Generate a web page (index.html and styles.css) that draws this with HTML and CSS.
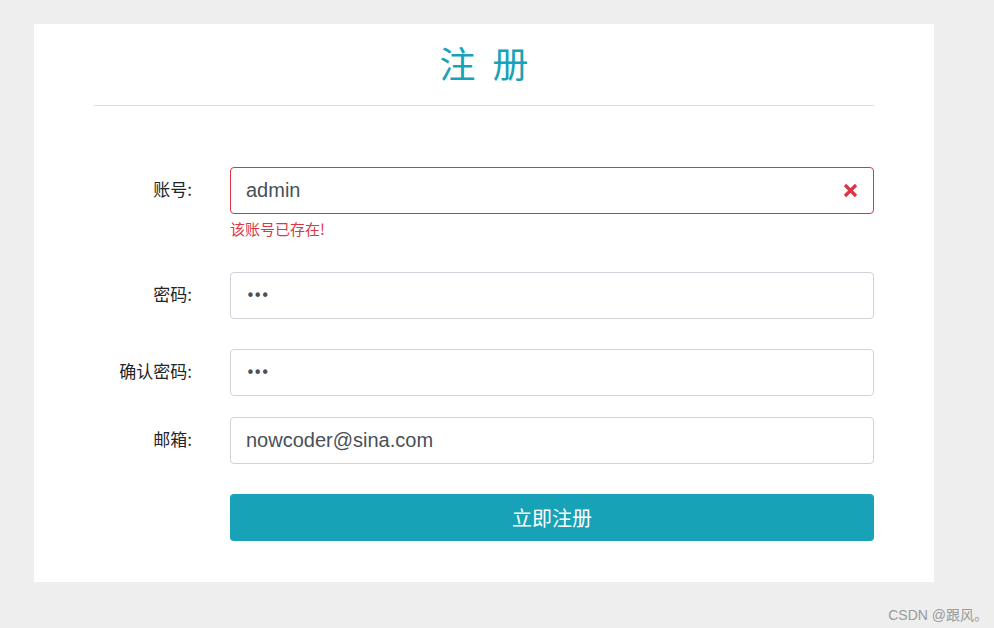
FILE: index.html
```html
<!DOCTYPE html>
<html lang="zh">
<head>
<meta charset="utf-8">
<title>注册</title>
<link rel="stylesheet" href="styles.css">
</head>
<body>
<div class="card">
  <h1 class="title">注 册</h1>
  <hr class="divider">
  <form class="form">
    <div class="row row-account">
      <label class="label">账号:</label>
      <div class="field">
        <div class="input invalid">
          <span class="value">admin</span>
          <svg class="x-icon" width="15" height="15" viewBox="0 0 15 15"><path d="M2 2 L13 13 M13 2 L2 13" stroke="#dc3545" stroke-width="3.2" stroke-linecap="butt"/></svg>
        </div>
        <div class="feedback">该账号已存在!</div>
      </div>
    </div>
    <div class="row row-pass">
      <label class="label">密码:</label>
      <div class="field"><div class="input"><span class="dots">•••</span></div></div>
    </div>
    <div class="row row-confirm">
      <label class="label">确认密码:</label>
      <div class="field"><div class="input"><span class="dots">•••</span></div></div>
    </div>
    <div class="row row-mail">
      <label class="label">邮箱:</label>
      <div class="field"><div class="input"><span class="value">nowcoder@sina.com</span></div></div>
    </div>
    <div class="row row-btn">
      <span class="label"></span>
      <div class="field"><button type="button" class="btn">立即注册</button></div>
    </div>
  </form>
</div>
<div class="watermark">CSDN @跟风。</div>
</body>
</html>
```
FILE: styles.css
```css
html, body {
  margin: 0;
  padding: 0;
}
body {
  background: #eeeeee;
  font-family: "Liberation Sans", "Noto Sans CJK SC", sans-serif;
  color: #212529;
  width: 994px;
  height: 628px;
  overflow: hidden;
  position: relative;
}
.card {
  background: #ffffff;
  width: 780px;
  margin: 24px 0 0 34px;
  padding: 12px 60px 41px;
}
.title {
  margin: 0;
  text-align: center;
  font-weight: 400;
  font-size: 36px;
  line-height: 52px;
  color: #17a2b8;
  font-family: "Noto Sans CJK SC", sans-serif;
  word-spacing: 9px;
}
.divider {
  margin: 17px 0 0;
  border: 0;
  border-top: 1px solid #dedede;
}
.form {
  padding-top: 61px;
}
.row {
  display: flex;
  align-items: flex-start;
}
.label {
  width: 98px;
  flex: none;
  text-align: right;
  font-size: 17px;
  line-height: 44px;
  margin-right: 38px;
  font-family: "Noto Sans CJK SC", sans-serif;
  color: #212529;
}
.field {
  flex: 1;
}
.input {
  height: 45px;
  border: 1px solid #ced4da;
  border-radius: 4px;
  display: flex;
  align-items: center;
  padding: 0 15px;
  font-size: 20px;
  color: #495057;
}
.input.invalid {
  border-color: #dc3545;
  justify-content: space-between;
  padding-right: 15px;
}
.value {
  font-family: "Liberation Sans", sans-serif;
}
.dots {
  font-size: 15px;
  letter-spacing: -1.5px;
  color: #495057;
  font-family: "DejaVu Sans", sans-serif;
}
.feedback {
  color: #dc3545;
  font-size: 15px;
  line-height: 18px;
  margin-top: 6px;
  font-family: "Noto Sans CJK SC", sans-serif;
}
.row-pass { margin-top: 34px; }
.row-confirm { margin-top: 30px; }
.row-mail { margin-top: 21px; }
.row-btn { margin-top: 30px; }
.btn {
  width: 100%;
  height: 47px;
  border: 0;
  border-radius: 4px;
  background: #17a2b8;
  color: #ffffff;
  font-size: 20px;
  font-family: "Noto Sans CJK SC", sans-serif;
  padding: 0;
  display: block;
}
.watermark {
  position: absolute;
  right: 6px;
  bottom: 4px;
  font-size: 14px;
  color: #9a9a9a;
  font-family: "Liberation Sans", "Noto Sans CJK SC", sans-serif;
}
```
